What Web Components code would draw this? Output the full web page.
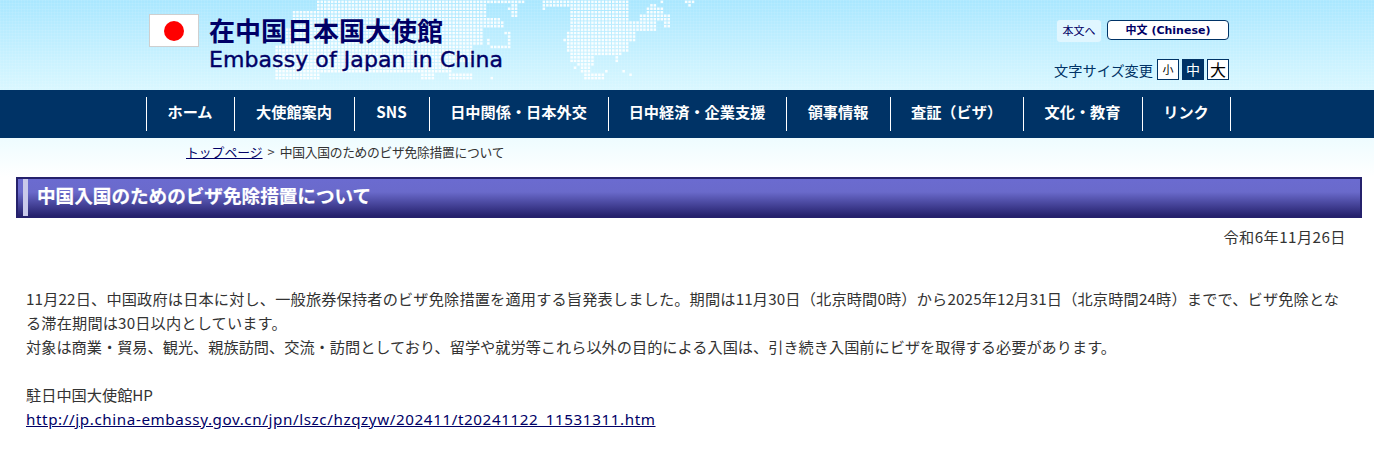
<!DOCTYPE html>
<html lang="ja">
<head>
<meta charset="utf-8">
<title>中国入国のためのビザ免除措置について</title>
<style>
  html, body { margin: 0; background: #fff; }
  body { font-family: "Noto Sans CJK JP", "Liberation Sans", sans-serif; }
  page-article a { color: #000066; font-family: "Noto Sans", sans-serif; letter-spacing: 0.6px; }
  page-article .wide { letter-spacing: 0.16px; }
  page-article [slot="date"] { letter-spacing: 0.45px; }
</style>
</head>
<body>
<site-header></site-header>
<site-nav>
  <nav-item>ホーム</nav-item>
  <nav-item>大使館案内</nav-item>
  <nav-item>SNS</nav-item>
  <nav-item>日中関係・日本外交</nav-item>
  <nav-item>日中経済・企業支援</nav-item>
  <nav-item>領事情報</nav-item>
  <nav-item>査証（ビザ）</nav-item>
  <nav-item>文化・教育</nav-item>
  <nav-item>リンク</nav-item>
</site-nav>
<bread-crumb current="中国入国のためのビザ免除措置について">トップページ</bread-crumb>
<page-title>中国入国のためのビザ免除措置について</page-title>
<page-article>
  <span slot="date">令和6年11月26日</span>
  <p><span class="wide">11月22日、中国政府は日本に対し、一般旅券保持者のビザ免除措置を適用する旨発表しました。期間は11月30日（北京時間0時）から2025年12月31日（北京時間24時）までで、ビザ免除となる滞在期間は30日以内としています。</span><br>対象は商業・貿易、観光、親族訪問、交流・訪問としており、留学や就労等これら以外の目的による入国は、引き続き入国前にビザを取得する必要があります。</p>
  <p>駐日中国大使館HP<br><a href="#">http://jp.china-embassy.gov.cn/jpn/lszc/hzqzyw/202411/t20241122_11531311.htm</a></p>
</page-article>

<script>
// dotted world map behind the header, zones are [x0, x1, y0, y1] in header pixels
const MAP_ZONES = [
  // asia
  [314, 485, 0, 10], [291, 485, 10, 17], [291, 500, 17, 27], [283, 483, 27, 43],
  [275, 470, 43, 60], [275, 450, 60, 70], [275, 320, 70, 80], [420, 433, 70, 78], [447, 470, 70, 80],
  [487, 490, 36, 44], [503, 510, 30, 33], [507, 510, 33, 45], [490, 508, 44, 46],
  [489, 491, 74, 80], [485, 525, 0, 3], [510, 516, 3, 15], [506, 509, 5, 9],
  [500, 503, 20, 26], [503, 509, 30, 33],
  // north america
  [540, 545, 0, 8], [546, 570, 0, 5], [570, 628, 0, 20], [570, 630, 20, 28],
  [570, 655, 20, 29], [639, 668, 13, 20], [646, 663, 7, 13], [650, 655, 3, 7],
  [663, 668, 20, 26], [565, 636, 29, 37], [562, 633, 37, 40], [564, 628, 40, 50],
  [568, 620, 50, 55], [568, 594, 55, 60], [615, 618, 55, 60], [574, 594, 60, 64],
  [578, 591, 64, 73], [584, 602, 73, 77], [595, 610, 77, 80], [571, 574, 64, 67],
  [619, 625, 67, 70], [629, 632, 71, 74], [605, 607, 68, 73], [684, 692, 0, 3], [687, 690, 3, 5], [660, 662, 0, 2]
];

class SiteHeader extends HTMLElement {
  connectedCallback() {
    const root = this.attachShadow({ mode: "open" });
    root.innerHTML = `
      <style>
        :host {
          display: block;
          position: relative;
          height: 90px;
          overflow: hidden;
          background:
            repeating-linear-gradient(90deg, rgba(255,255,255,.07) 0 1px, transparent 1px 3px),
            repeating-linear-gradient(rgba(255,255,255,.07) 0 1px, transparent 1px 3px),
            linear-gradient(#a9e7ff, #d9f7ff);
        }
        svg { position: absolute; left: 0; top: 0; }
        .row {
          position: relative;
          display: flex;
          justify-content: space-between;
          padding: 14px 145px 0 149px;
        }
        .brand { display: flex; gap: 10px; color: #000066; }
        .flag {
          box-sizing: border-box;
          width: 50px;
          height: 33px;
          background: #fff;
          border: 1px solid #cfcfcf;
          display: flex;
          align-items: center;
          justify-content: center;
        }
        .flag i { width: 20px; height: 20px; border-radius: 50%; background: #f00; }
        .names { margin-top: -1px; }
        .ja { font-size: 26px; font-weight: 700; line-height: 34px; }
        .en { font-family: "DejaVu Sans", sans-serif; font-size: 22px; line-height: 26px; letter-spacing: 0.08px; -webkit-text-stroke: 0.4px #000066; }
        .tools { display: flex; flex-direction: column; align-items: flex-end; padding-top: 6px; }
        .links { display: flex; gap: 6px; align-items: flex-start; }
        .skip {
          width: 44px;
          height: 22px;
          line-height: 20px;
          text-align: center;
          font-size: 11px;
          color: #000066;
          background: #e0f6ff;
          border-radius: 3px;
        }
        .lang {
          box-sizing: border-box;
          width: 122px;
          height: 20px;
          line-height: 20px;
          text-align: center;
          font-family: "DejaVu Sans", "Noto Sans CJK JP", sans-serif;
          font-size: 11px;
          font-weight: 700;
          color: #000066;
          background: #fff;
          border: 1px solid #003366;
          border-radius: 4px;
        }
        .sizes { display: flex; align-items: center; gap: 3px; margin-top: 17px; font-size: 14.2px; color: #003366; }
        .sizes span { margin-right: 1px; }
        .sizes b {
          box-sizing: border-box;
          width: 22px;
          height: 21px;
          text-align: center;
          font-weight: 400;
          background: #fff;
          color: #000;
          border: 1px solid #003366;
        }
        .s { font-size: 11px; line-height: 18px; color: #333; }
        .m { font-size: 14px; line-height: 18px; background: #003366 !important; color: #fff !important; }
        .l { font-size: 16px; line-height: 18px; }
      </style>
      <svg width="1374" height="90" fill="#fff" fill-opacity=".9" id="map"></svg>
      <div class="row">
        <div class="brand">
          <div class="flag"><i></i></div>
          <div class="names">
            <div class="ja">在中国日本国大使館</div>
            <div class="en">Embassy of Japan in China</div>
          </div>
        </div>
        <div class="tools">
          <div class="links">
            <div class="skip">本文へ</div>
            <div class="lang">中文 (Chinese)</div>
          </div>
          <div class="sizes">
            <span>文字サイズ変更</span>
            <b class="s">小</b><b class="m">中</b><b class="l">大</b>
          </div>
        </div>
      </div>`;
    // whole dots only, so zones never cut a dot in half
    const pitch = 3.47;
    let dots = "";
    for (let y = 0.6; y < 80; y += pitch) {
      for (let x = 275.4; x < 700; x += pitch) {
        if (MAP_ZONES.some(([x0, x1, y0, y1]) => x >= x0 && x < x1 && y >= y0 && y < y1)) {
          dots += `<rect x="${x.toFixed(1)}" y="${y.toFixed(1)}" width="2.5" height="2.5"/>`;
        }
      }
    }
    root.getElementById("map").innerHTML = dots;
  }
}

class SiteNav extends HTMLElement {
  connectedCallback() {
    this.attachShadow({ mode: "open" }).innerHTML = `
      <style>
        :host {
          display: grid;
          grid-template-columns: 88px 120px 75px 179px 178px 104px 133px 119px 88px 1px;
          height: 48px;
          padding: 7px 0 7px 146px;
          box-sizing: border-box;
          background: #003366;
        }
        .end { background: #fff; }
      </style>
      <slot></slot><div class="end"></div>`;
  }
}

class NavItem extends HTMLElement {
  connectedCallback() {
    this.attachShadow({ mode: "open" }).innerHTML = `
      <style>
        :host {
          display: block;
          border-left: 1px solid #fff;
          padding-right: 1px;
          color: #fff;
          font-size: 15.2px;
          font-weight: 700;
          line-height: 28px;
          text-align: center;
        }
      </style>
      <slot></slot>`;
  }
}

class BreadCrumb extends HTMLElement {
  connectedCallback() {
    const current = this.getAttribute("current");
    this.attachShadow({ mode: "open" }).innerHTML = `
      <style>
        :host {
          display: block;
          height: 39px;
          padding: 4px 0 0 186px;
          box-sizing: border-box;
          background: linear-gradient(#eefcff, #fff);
          font-size: 12.8px;
          line-height: 20px;
          color: #333;
        }
        a { color: #000066; }
        .sep { margin: 0 5px; }
        .current { letter-spacing: -0.3px; }
      </style>
      <a href="#"><slot></slot></a><span class="sep">&gt;</span><span class="current">${current}</span>`;
  }
}

class PageTitle extends HTMLElement {
  connectedCallback() {
    this.attachShadow({ mode: "open" }).innerHTML = `
      <style>
        :host {
          display: block;
          margin: 0 12px 0 16px;
          border: 2px solid #25216c;
          background: linear-gradient(#6b6bd0 0, #6a6acb 35%, #25216c 100%);
        }
        .inner {
          margin: 0 0 0 5px;
          padding: 0 0 0 9px;
          border-left: 5px solid #c9c9ea;
          height: 37px;
          color: #fff;
          font-size: 18.6px;
          font-weight: 700;
          line-height: 31px;
          -webkit-text-stroke: 0.2px #fff;
        }
      </style>
      <div class="inner"><slot></slot></div>`;
  }
}

class PageArticle extends HTMLElement {
  connectedCallback() {
    this.attachShadow({ mode: "open" }).innerHTML = `
      <style>
        :host {
          display: block;
          padding: 6px 28px 0 26px;
          color: #333;
          font-size: 15.2px;
          line-height: 24px;
        }
        .date { text-align: right; margin-bottom: 38px; }
        ::slotted(p) { margin: 0 0 24px; }
      </style>
      <div class="date"><slot name="date"></slot></div>
      <slot></slot>`;
  }
}

customElements.define("site-header", SiteHeader);
customElements.define("site-nav", SiteNav);
customElements.define("nav-item", NavItem);
customElements.define("bread-crumb", BreadCrumb);
customElements.define("page-title", PageTitle);
customElements.define("page-article", PageArticle);
</script>
</body>
</html>
